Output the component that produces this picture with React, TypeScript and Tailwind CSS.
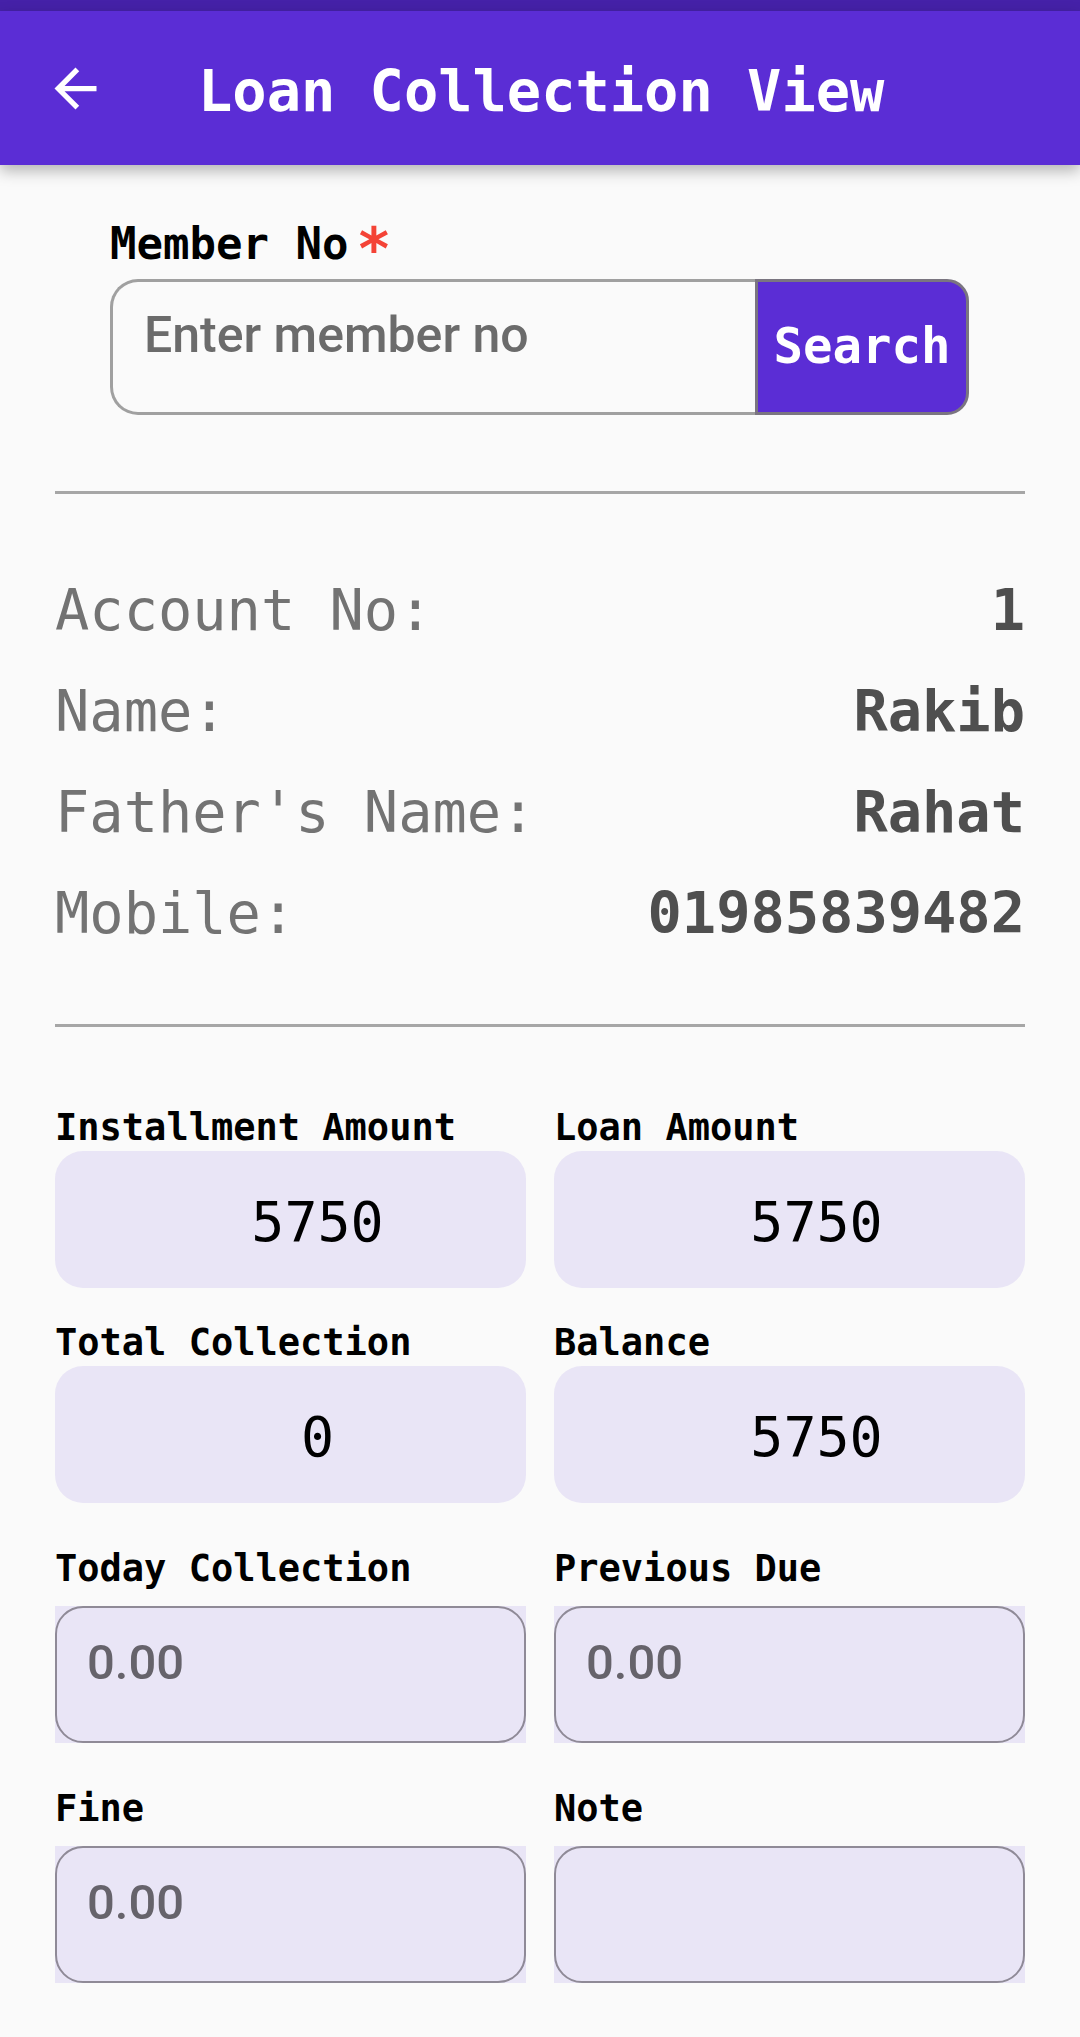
import type { ReactNode } from "react";

const mono = "font-['DejaVu_Sans_Mono','Liberation_Mono',monospace]";
const sans = "font-['Roboto','Noto_Sans',sans-serif]";

type InfoRowProps = {
  label: string;
  value: string;
};

function InfoRow({ label, value }: InfoRowProps) {
  return (
    <div className={`flex items-center justify-between text-[57px] leading-[101px] ${mono}`}>
      <span className="text-[#737373]">{label}</span>
      <span className="font-bold text-[#4f4f4f]">{value}</span>
    </div>
  );
}

function FieldLabel({ children }: { children: ReactNode }) {
  return <p className={`text-[37px] font-bold leading-[37px] text-black ${mono}`}>{children}</p>;
}

function ReadonlyBox({ label, value }: { label: string; value: string }) {
  return (
    <div>
      <FieldLabel>{label}</FieldLabel>
      <div
        className={`mt-[5px] flex h-[137px] items-center justify-center rounded-[28px] bg-[#e9e5f6] pl-[54px] pt-[6px] text-[55px] text-black ${mono}`}
      >
        {value}
      </div>
    </div>
  );
}

function InputBox({ label, placeholder, gap }: { label: string; placeholder: string; gap: string }) {
  return (
    <div>
      <FieldLabel>{label}</FieldLabel>
      <div className={`${gap} h-[137px] bg-[#e9e5f6]`}>
        <input
          type="text"
          placeholder={placeholder}
          className={`box-border h-full w-full rounded-[28px] border-[2.5px] border-[#8f8a97] bg-transparent pb-[24px] pl-[30px] text-[49px] font-medium text-[#333] outline-none placeholder:text-[#66636b] ${sans}`}
        />
      </div>
    </div>
  );
}

export default function App() {
  return (
    <div className="min-h-[2037px] w-[1080px] bg-[#fafafa]">
      <div className="h-[11px] bg-[#4521a8]" />
      <header className="relative z-10 flex h-[154px] items-center bg-[#5b2dd5] shadow-[0_6px_14px_rgba(0,0,0,0.28)]">
        <svg viewBox="0 0 24 24" className="ml-[44px] h-[63px] w-[63px]" fill="white">
          <path d="M20 11H7.83l5.59-5.59L12 4l-8 8 8 8 1.41-1.41L7.83 13H20v-2z" />
        </svg>
        <h1 className={`ml-[91px] mt-[7px] text-[57px] font-bold text-white ${mono}`}>Loan Collection View</h1>
      </header>

      <section className="px-[110px] pr-[111px]">
        <label className={`mt-[57px] flex h-[44px] items-start text-[44px] font-bold leading-[44px] text-black ${mono}`}>
          Member No
          <span className="ml-[8px] mt-[-2px] text-[58px] leading-[58px] text-[#f44336]">*</span>
        </label>
        <div className="mt-[13px] flex h-[136px]">
          <input
            type="text"
            placeholder="Enter member no"
            className={`box-border h-full min-w-0 flex-1 rounded-l-[28px] border-[3px] border-r-0 border-[#a0a0a0] bg-transparent pb-[24px] pl-[31px] text-[50px] font-medium text-[#333] outline-none placeholder:text-[#6b6b6b] ${sans}`}
          />
          <button
            type="button"
            className={`box-border h-full w-[214px] rounded-r-[22px] border-[3px] border-[#7a7580] bg-[#5b2dd5] text-[49px] font-bold text-white ${mono}`}
          >
            Search
          </button>
        </div>
      </section>

      <main className="px-[55px]">
        <div className="mt-[76px] h-[3px] bg-[#a6a6a6]" />

        <div className="mt-[66px]">
          <InfoRow label="Account No:" value="1" />
          <InfoRow label="Name:" value="Rakib" />
          <InfoRow label="Father's Name:" value="Rahat" />
          <InfoRow label="Mobile:" value="01985839482" />
        </div>

        <div className="mt-[60px] h-[3px] bg-[#a6a6a6]" />

        <div className="mt-[82px] grid grid-cols-2 gap-x-[28px]">
          <ReadonlyBox label="Installment Amount" value="5750" />
          <ReadonlyBox label="Loan Amount" value="5750" />
        </div>
        <div className="mt-[36px] grid grid-cols-2 gap-x-[28px]">
          <ReadonlyBox label="Total Collection" value="0" />
          <ReadonlyBox label="Balance" value="5750" />
        </div>
        <div className="mt-[47px] grid grid-cols-2 gap-x-[28px]">
          <InputBox label="Today Collection" placeholder="0.00" gap="mt-[19px]" />
          <InputBox label="Previous Due" placeholder="0.00" gap="mt-[19px]" />
        </div>
        <div className="mt-[47px] grid grid-cols-2 gap-x-[28px]">
          <InputBox label="Fine" placeholder="0.00" gap="mt-[19px]" />
          <InputBox label="Note" placeholder="" gap="mt-[19px]" />
        </div>
      </main>
    </div>
  );
}
